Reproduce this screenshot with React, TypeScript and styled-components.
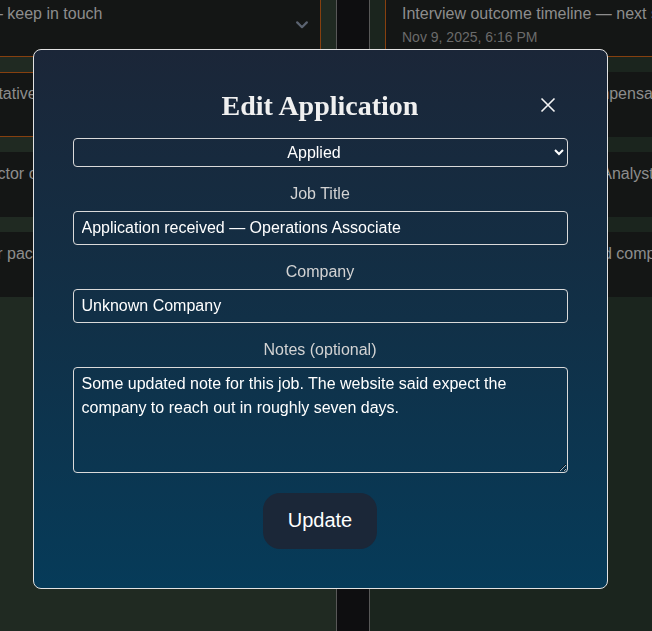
import React, { useState } from 'react';
import styled, { createGlobalStyle } from 'styled-components';

const GlobalStyle = createGlobalStyle`
	html, body {
		margin: 0;
		padding: 0;
		height: 100%;
		overflow: hidden;
		background: #0e0e10;
	}
	body {
		font-family: "Liberation Sans", Arial, sans-serif;
	}
	* {
		box-sizing: border-box;
	}
`;

interface CardData {
	title: string;
	date: string;
	highlight?: boolean;
	expandable?: boolean;
}

const leftCards: CardData[] = [
	{ title: 'Met the hiring manager – keep in touch', date: 'Nov 8, 2025, 3:42 PM', highlight: true, expandable: true },
	{ title: 'Spoke with HR representative about relocation support', date: 'Nov 7, 2025, 11:05 AM', highlight: true },
	{ title: 'Final video call with Director of Operations', date: 'Nov 6, 2025, 2:30 PM' },
	{ title: 'Negotiating the new offer package details', date: 'Nov 5, 2025, 9:12 AM' },
];

const rightCards: CardData[] = [
	{ title: 'Interview outcome timeline — next steps', date: 'Nov 9, 2025, 6:16 PM', highlight: true, expandable: true },
	{ title: 'Recruiter call about total compensation range', date: 'Nov 8, 2025, 10:48 AM' },
	{ title: 'Second interview for Senior Analyst role', date: 'Nov 7, 2025, 4:20 PM' },
	{ title: 'Negotiation call on salary and compensation', date: 'Nov 6, 2025, 1:55 PM' },
];

export default function App() {
	const [status, setStatus] = useState('Applied');
	const [title, setTitle] = useState('Application received — Operations Associate');
	const [company, setCompany] = useState('Unknown Company');
	const [notes, setNotes] = useState(
		'Some updated note for this job. The website said expect the company to reach out in roughly seven days.'
	);

	return (
		<>
			<GlobalStyle />
			<Board>
				<Column tone="#202a22">
					{leftCards.map((c, idx) => (
						<BoardCard key={idx} card={c} />
					))}
				</Column>
				<Column tone="#1b251e">
					{rightCards.map((c, idx) => (
						<BoardCard key={idx} card={c} />
					))}
				</Column>
			</Board>

			<Overlay>
				<Modal>
					<Header>
						<span />
						<Title>Edit Application</Title>
						<CloseBtn aria-label="Close">
							<svg width="16" height="16" viewBox="0 0 16 16" fill="none">
								<path d="M1.5 1.5 L14.5 14.5 M14.5 1.5 L1.5 14.5" stroke="#f4f4f4" strokeWidth="1.6" />
							</svg>
						</CloseBtn>
					</Header>
					<Form onSubmit={(e) => e.preventDefault()}>
						<Select value={status} onChange={(e) => setStatus(e.target.value)}>
							<option>Wishlist</option>
							<option>Applied</option>
							<option>Interviewing</option>
							<option>Offer</option>
							<option>Rejected</option>
						</Select>
						<Field>
							<Label htmlFor="job-title">Job Title</Label>
							<Input id="job-title" value={title} onChange={(e) => setTitle(e.target.value)} />
						</Field>
						<Field>
							<Label htmlFor="company">Company</Label>
							<Input id="company" value={company} onChange={(e) => setCompany(e.target.value)} />
						</Field>
						<Field>
							<Label htmlFor="notes">Notes (optional)</Label>
							<TextArea id="notes" value={notes} onChange={(e) => setNotes(e.target.value)} />
						</Field>
						<UpdateBtn type="submit">Update</UpdateBtn>
					</Form>
				</Modal>
			</Overlay>
		</>
	);
}

function BoardCard({ card }: { card: CardData }) {
	return (
		<Card highlight={card.highlight}>
			<CardInfo>
				<CardTitle>{card.title}</CardTitle>
				<CardDate>{card.date}</CardDate>
			</CardInfo>
			{card.expandable && (
				<svg width="12" height="8" viewBox="0 0 12 8" fill="none">
					<path d="M1.2 1.4 L6 6.2 L10.8 1.4" stroke="#5b6370" strokeWidth="2.2" strokeLinecap="round" strokeLinejoin="round" />
				</svg>
			)}
		</Card>
	);
}

// board behind the dialog (scrolled sideways, so the first column is cut off)
const Board = styled.div`
	display: flex;
	gap: 32px;
	height: 100vh;
	margin-left: -208px;
`;

const Column = styled.section<{ tone: string }>`
	flex: 0 0 545px;
	display: flex;
	flex-direction: column;
	gap: 15px;
	margin-top: -8px;
	padding: 0 15px;
	background: ${({ tone }) => tone};
	border-left: 1px solid #585858;
	border-right: 1px solid #585858;
`;

const Card = styled.div<{ highlight?: boolean }>`
	display: flex;
	align-items: center;
	gap: 12px;
	height: 65px;
	padding: 12px 12px 11px 16px;
	background: #141615;
	border: 1px solid ${({ highlight }) => (highlight ? '#86400f' : '#141615')};
	overflow: hidden;
`;

const CardInfo = styled.div`
	flex: 1;
	min-width: 0;
	display: flex;
	flex-direction: column;
	gap: 6px;
`;

const CardTitle = styled.div`
	font-size: 16px;
	line-height: 18px;
	color: #8d8d8d;
	white-space: nowrap;
	overflow: hidden;
`;

const CardDate = styled.div`
	font-size: 14px;
	line-height: 16px;
	color: #6b6b6b;
	white-space: nowrap;
`;

// dialog
const Overlay = styled.div`
	position: fixed;
	inset: 0;
	display: flex;
	align-items: center;
	justify-content: center;
	padding: 6px 12px 0 0;
`;

const Modal = styled.div`
	width: 575px;
	padding: 39px;
	display: flex;
	flex-direction: column;
	border: 1px solid #e2e2e2;
	border-radius: 8px;
	background: linear-gradient(180deg, #1b2638 0%, #113047 50%, #063b59 100%);
`;

const Header = styled.div`
	display: grid;
	grid-template-columns: 1fr auto 1fr;
	align-items: center;
	height: 33px;
	margin-bottom: 16px;
`;

const Title = styled.h2`
	margin: 0;
	font-family: "Liberation Serif", "Times New Roman", serif;
	font-size: 28px;
	font-weight: 700;
	line-height: 33px;
	color: #f0f0f0;
`;

const CloseBtn = styled.button`
	justify-self: end;
	width: 40px;
	height: 33px;
	display: flex;
	align-items: center;
	justify-content: center;
	padding: 0;
	background: none;
	border: none;
	cursor: pointer;
`;

const Form = styled.form`
	display: flex;
	flex-direction: column;
	gap: 18px;
`;

const Select = styled.select`
	width: 100%;
	height: 29px;
	padding: 0 6px;
	font-family: "Liberation Sans", Arial, sans-serif;
	font-size: 16px;
	color: #ffffff;
	text-align: center;
	text-align-last: center;
	background: transparent;
	border: 1px solid #dadada;
	border-radius: 4px;

	option {
		color: #ffffff;
		background: #1b2638;
	}
`;

const Field = styled.div`
	display: flex;
	flex-direction: column;
`;

const Label = styled.label`
	margin-bottom: 8px;
	font-size: 16px;
	line-height: 18px;
	text-align: center;
	color: #d3d3d3;
`;

const Input = styled.input`
	width: 100%;
	height: 34px;
	padding: 0 8px;
	font-family: "Liberation Sans", Arial, sans-serif;
	font-size: 16px;
	color: #ffffff;
	background: transparent;
	border: 1px solid #dadada;
	border-radius: 4px;
	outline: none;
`;

const TextArea = styled.textarea`
	width: 100%;
	height: 106px;
	padding: 4px 8px;
	font-family: "Liberation Sans", Arial, sans-serif;
	font-size: 16px;
	line-height: 24px;
	color: #ffffff;
	background: transparent;
	border: 1px solid #dadada;
	border-radius: 4px;
	outline: none;
`;

const UpdateBtn = styled.button`
	align-self: center;
	height: 56px;
	margin-top: 2px;
	padding: 0 25px;
	font-family: "Liberation Sans", Arial, sans-serif;
	font-size: 20px;
	color: #ffffff;
	background: #1b2738;
	border: none;
	border-radius: 17px;
	cursor: pointer;
`;
